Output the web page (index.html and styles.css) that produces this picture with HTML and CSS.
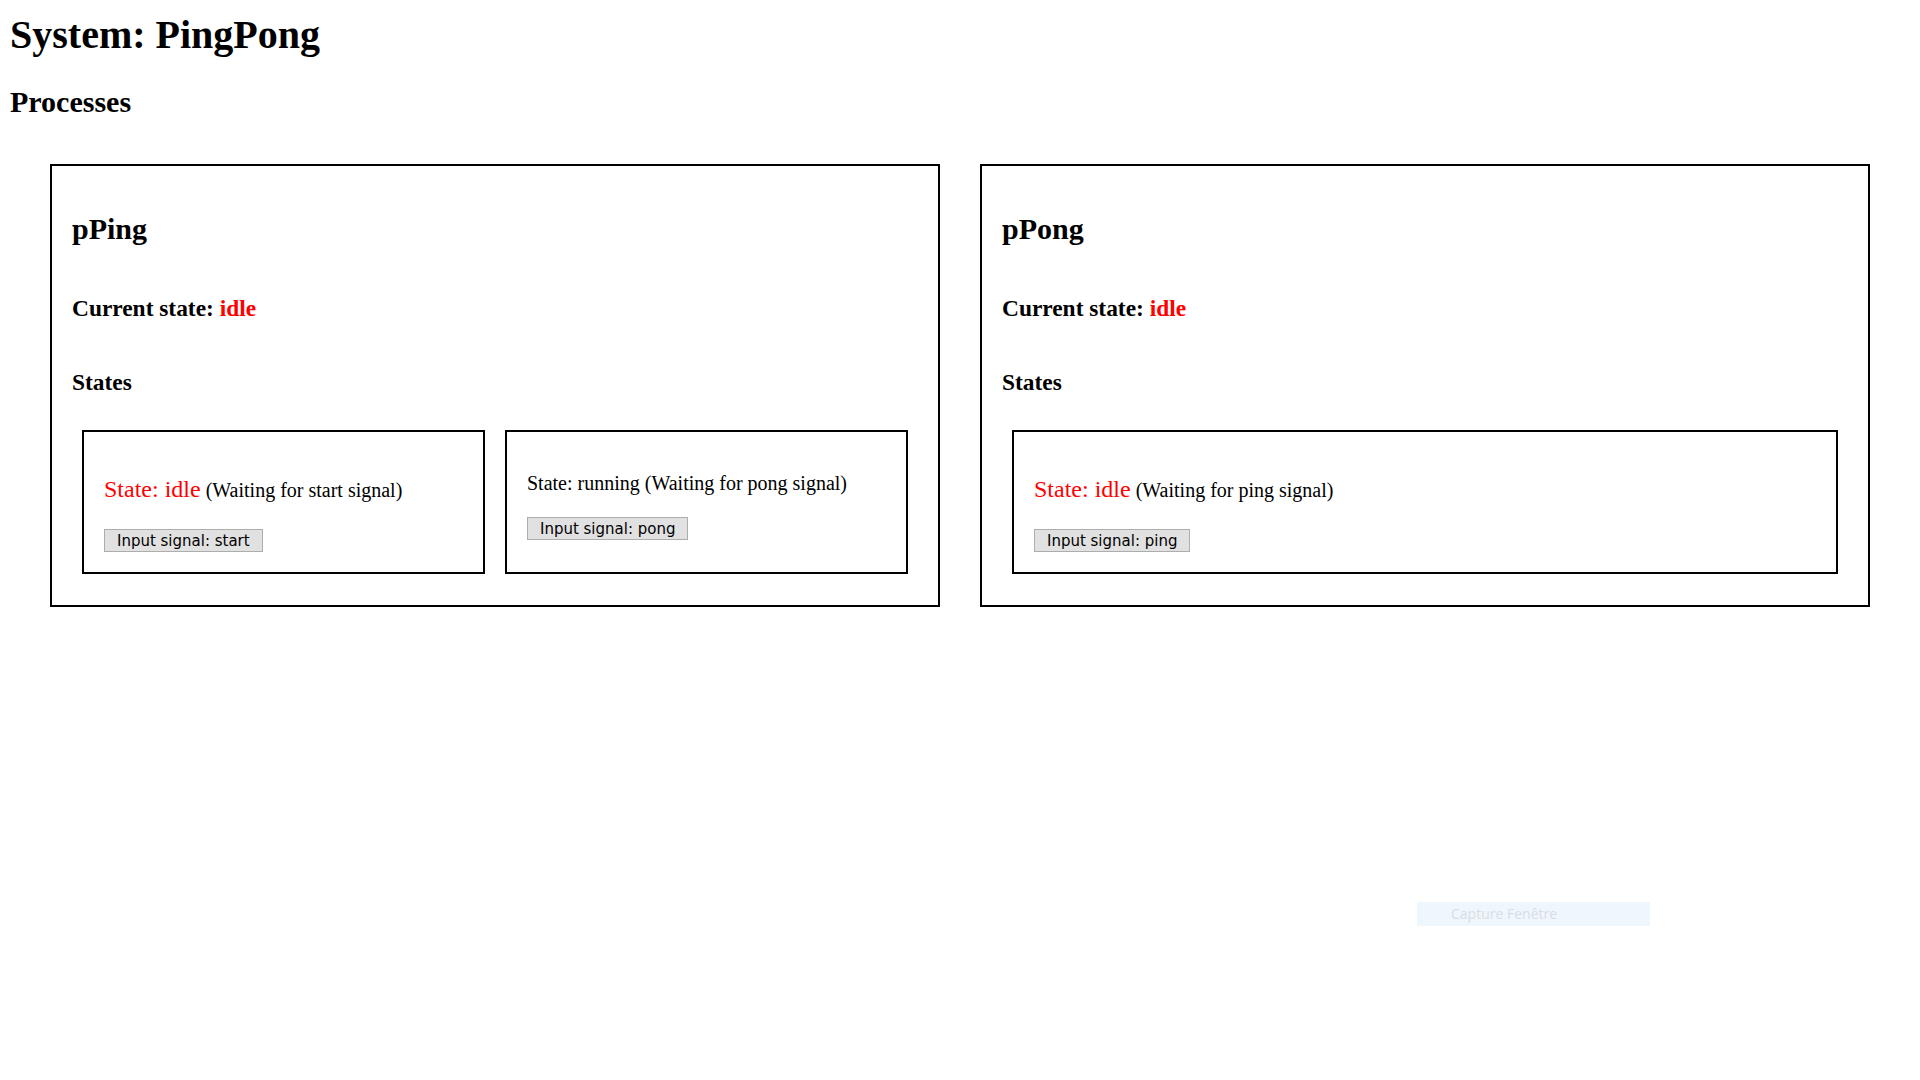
FILE: index.html
```html
<!DOCTYPE html>
<html lang="en">
<head>
<meta charset="utf-8">
<title>System: PingPong</title>
<link rel="stylesheet" href="styles.css">
</head>
<body>
<h1 class="title">System: PingPong</h1>
<h2 class="section">Processes</h2>
<div class="processes">
  <div class="process">
    <h2 class="proc-name">pPing</h2>
    <h3 class="proc-label">Current state: <span class="active">idle</span></h3>
    <h3 class="proc-label">States</h3>
    <div class="states">
      <div class="state">
        <p class="state-line big"><span class="state-name active">State: idle</span> (Waiting for start signal)</p>
        <button class="signal">Input signal: start</button>
      </div>
      <div class="state">
        <p class="state-line">State: running (Waiting for pong signal)</p>
        <button class="signal">Input signal: pong</button>
      </div>
    </div>
  </div>
  <div class="process">
    <h2 class="proc-name">pPong</h2>
    <h3 class="proc-label">Current state: <span class="active">idle</span></h3>
    <h3 class="proc-label">States</h3>
    <div class="states">
      <div class="state">
        <p class="state-line big"><span class="state-name active">State: idle</span> (Waiting for ping signal)</p>
        <button class="signal">Input signal: ping</button>
      </div>
    </div>
  </div>
</div>
<div class="capture">Capture Fenêtre</div>
</body>
</html>
```
FILE: styles.css
```css
html, body {
  background: #ffffff;
}
body {
  margin: 0;
  padding: 0 10px;
  font-family: "Liberation Serif", "Times New Roman", serif;
  font-size: 20px;
  color: #000000;
}
.title {
  font-size: 40px;
  font-weight: bold;
  line-height: 46px;
  margin: 12px 0 0;
}
.section {
  font-size: 30px;
  font-weight: bold;
  line-height: 34px;
  margin: 27px 0 0;
}
.processes {
  display: flex;
  gap: 40px;
  padding: 0 40px;
  margin-top: 45px;
}
.process {
  flex: 1 1 0;
  display: flex;
  flex-direction: column;
  border: 2px solid #000000;
  padding: 20px;
  min-width: 0;
}
.proc-name {
  font-size: 30px;
  font-weight: bold;
  line-height: 34px;
  margin: 26px 0 26px;
}
.proc-label {
  font-size: 23.4px;
  font-weight: bold;
  line-height: 27px;
  margin: 23.4px 0;
}
.active {
  color: #ff0000;
}
.states {
  display: flex;
  gap: 20px;
  padding: 0 10px;
  margin: 10px 0 11px;
}
.state {
  flex: 1 1 0;
  display: flex;
  flex-direction: column;
  align-items: flex-start;
  border: 2px solid #000000;
  padding: 20px;
  min-width: 0;
}
.state-line {
  margin: 20px 0 22px;
  font-size: 20px;
  line-height: 23px;
}
.state-line.big {
  line-height: 35px;
  margin: 20px 0 21px;
}
.state-name {
  font-size: 24px;
}
.signal {
  font-family: "DejaVu Sans Condensed", "Liberation Sans", sans-serif;
  font-size: 16.67px;
  line-height: 21px;
  color: #000000;
  background: #e1e1e1;
  border: 1px solid #adadad;
  border-radius: 0;
  padding: 0 12px;
  margin: 0;
}
.capture {
  position: absolute;
  left: 1417px;
  top: 902px;
  width: 233px;
  height: 24px;
  box-sizing: border-box;
  padding-left: 34px;
  background: #eff7fe;
  color: #d9dde1;
  font-family: "Open Sans", "Noto Sans", sans-serif;
  font-size: 14px;
  line-height: 24px;
}
```
